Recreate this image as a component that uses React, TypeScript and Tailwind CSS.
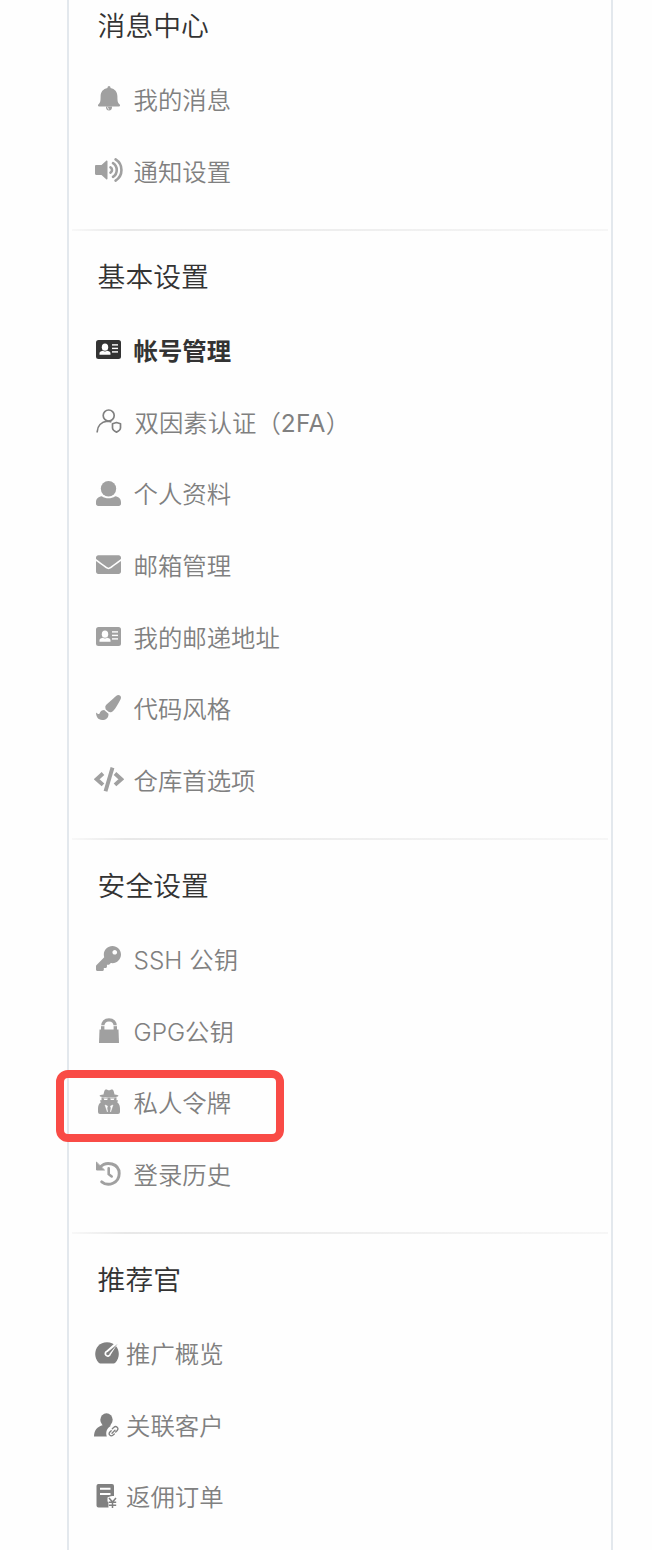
import type { ReactNode } from "react";
import { FaEnvelope, FaPaintBrush, FaKey } from "react-icons/fa";

const BellIcon = () => (
  <svg viewBox="0 0 22 25" className="h-[25px] w-[22px]" fill="currentColor">
    <path d="M9.500 1.500a1.500 1.500 0 0 1 3 0v.6c4.500.9 6.800 4 6.900 8.200 0 5.200.4 6.600 2.100 7.900 1 .9.500 2.400-1 2.400h-19c-1.500 0-2-1.500-1-2.400C2.200 16.900 2.600 15.500 2.600 10.300 2.700 6.100 5 3 9.500 2.100z" />
    <path d="M8 20.500h6c.2 2.400-1 4-3 4s-3.200-1.600-3-4z" />
    <path d="M9.600 21.200c0 1.200.6 1.900 1.500 2" fill="none" stroke="#fefefe" strokeWidth=".9" />
  </svg>
);

const VolumeIcon = () => (
  <svg viewBox="0 0 28 25" className="h-[25px] w-[28px]" fill="currentColor">
    <path d="M1.200 7h5.300l4.700-4.300c.5-.5 1.300-.2 1.300.6v17.400c0 .8-.8 1.100-1.300.6L6.500 17H1.200C.5 17 0 16.500 0 15.800V8.200C0 7.500.5 7 1.200 7z" />
    <g fill="none" stroke="currentColor" strokeWidth="2.600" strokeLinecap="round">
      <path d="M15.500 9.300c2 1.100 2 4.300 0 5.400" />
      <path d="M18 5.100c5 3.200 5 10.600 0 13.800" />
      <path d="M20.600 1.400c7.800 5 7.800 16.200 0 21.200" />
    </g>
  </svg>
);

const CardIcon = () => (
  <svg viewBox="0 0 25 19" className="h-[19px] w-[25px]" fill="currentColor">
    <rect width="25" height="19" rx="2.500" />
    <g fill="#fefefe">
      <ellipse cx="9" cy="7.200" rx="3.200" ry="3.600" />
      <path d="M3.500 14.800v-1.200c0-1.500.8-2.200 3.300-2.800 1.300.8 3.100.8 4.400 0 2.500.6 3.300 1.300 3.300 2.800v1.200z" />
      <rect x="16" y="4.200" width="6" height="1.400" />
      <rect x="16" y="7.700" width="6" height="1.400" />
      <rect x="16" y="11.200" width="6" height="1.400" />
    </g>
  </svg>
);

const ShieldUserIcon = () => (
  <svg viewBox="0 0 26 24" className="h-[24px] w-[26px] text-[#808080]" fill="none" stroke="currentColor" strokeWidth="1.700" strokeLinecap="round" strokeLinejoin="round">
    <circle cx="12.700" cy="6.500" r="5.500" />
    <path d="M1.200 22.800c.3-5.700 4-10 10-10.600 1.500 0 2.500.2 3.500.6" />
    <path d="M20.500 13.500l4 1.300v4c0 2-1.600 3.300-4 4.300-2.400-1-4-2.300-4-4.300v-4z" />
  </svg>
);

const UserIcon = () => (
  <svg viewBox="0 0 25 25" className="h-[25px] w-[25px]" fill="currentColor">
    <circle cx="12.500" cy="7.800" r="7.700" />
    <path d="M5.800 15.300c4 2.700 9.400 2.700 13.400 0 3.800.4 5.800 2.700 5.800 5.900v1.600c0 1.300-1 2.200-2.200 2.200H2.200C1 25 0 24.100 0 22.800v-1.600c0-3.200 2-5.500 5.800-5.900z" />
  </svg>
);

const CodeIcon = () => (
  <svg viewBox="0 0 30 25" className="h-[25px] w-[30px]" fill="none" stroke="currentColor" strokeWidth="3.900">
    <path d="M9 6.500L2.700 12.200L9 17.900M21 6.500L27.300 12.200L21 17.900" />
    <path d="M18.500 .6L11.500 24.200" />
  </svg>
);

const LockIcon = () => (
  <svg viewBox="0 0 20 25" className="h-[25px] w-[20px]" fill="currentColor">
    <path d="M.5 11.500h19L20 25H0z" />
    <path d="M3.700 12V8.500C3.700 4.500 6 1.900 10 1.900s6.300 2.600 6.300 6.600V12" fill="none" stroke="currentColor" strokeWidth="3.400" />
    <path d="M1.500 7.700h4.500M14 7.700h4.500" stroke="#fefefe" strokeWidth=".9" />
  </svg>
);

const AgentIcon = () => (
  <svg viewBox="0 0 22 25" className="h-[25px] w-[22px]" fill="currentColor">
    <path d="M7.500.6C8.800 0 9.800 1.200 11 1.200S13.200 0 14.500.6c1.200.8 1.600 3 2 4.800 2.500.4 4 .8 4 1.400 0 1-4 1.900-9.500 1.900s-9.500-.9-9.500-1.900c0-.6 1.500-1 4-1.400.4-1.800.8-4 2-4.800z" />
    <path d="M3.500 8.200c4.500.9 10.500.9 15 0v3h1.500l-.7 2.300c1.900 1.300 2.700 3.300 2.700 6.300v3.200a2 2 0 0 1-2 2H2a2 2 0 0 1-2-2v-3.200c0-3 .8-5 2.700-6.300L2 11.200h1.500z" />
    <path d="M5.500 9.600h4.300l-.6 1.500H6.300zM16.500 9.600h-4.300l.6 1.500h2.900z" fill="#fefefe" />
    <path d="M7 16l2.500 1-.5 2 .5 4zM15 16l-2.500 1 .5 2-.5 4z" fill="#fefefe" stroke="#fefefe" strokeWidth=".5" />
  </svg>
);

const HistoryIcon = () => (
  <svg viewBox="0 0 25 25" className="h-[25px] w-[25px]" fill="none" stroke="currentColor" strokeWidth="2.900" strokeLinecap="round">
    <path d="M4 6.200C10.500-.7 23.200 2.500 23.200 12.500c0 9.300-10.800 13.800-17.500 8.300" />
    <path d="M12.700 7.300v5.900l3 2.300" strokeWidth="2.600" />
    <path d="M.5 1.500V9h7.600z" fill="currentColor" strokeWidth="1" strokeLinejoin="round" />
  </svg>
);

const GaugeIcon = () => (
  <svg viewBox="0 0 24 22" className="h-[22px] w-[24px]" fill="currentColor">
    <path d="M3.700 20.700C-3.500 13 1 .3 12 .3S27.500 13 20.300 20.700c-.5.5-1 .8-1.700.8H5.400c-.7 0-1.200-.3-1.700-.8z" />
    <path d="M22.800 1.500L16 12.200a3.300 3.300 0 1 1-4.400-3.700L20 1z" fill="#fefefe" />
    <path d="M22.800 1.800l-8.200 9.800a1.700 1.700 0 1 1-1.900-1.700z" />
  </svg>
);

const LinkedUserIcon = () => (
  <svg viewBox="0 0 25 24" className="h-[24px] w-[25px]" fill="currentColor">
    <ellipse cx="12.500" cy="6.800" rx="6.200" ry="6.500" />
    <path d="M0 23.500c.2-6.500 3-9.500 9-11.500h6.500l1.500.8c-4 2.200-5.700 6.200-4.200 10.700z" />
    <g fill="none" stroke="currentColor" strokeWidth="1.300" strokeLinecap="round">
      <path d="M18.300 15.700l1.400-1.300c2.500-2.200 5.500.7 3.500 3.100l-1.500 1.500" />
      <path d="M20.300 21l-1.200 1.100c-2.500 2-5.200-.8-3.200-3.100l1.300-1.300M18 20.200l3-3" />
    </g>
  </svg>
);

const OrderIcon = () => (
  <svg viewBox="0 0 22 24" className="h-[24px] w-[22px]" fill="currentColor">
    <path d="M2 0h14a2 2 0 0 1 2 2v10c-2 0-4.500.3-6.500 1.500v4l1 .5v5.500H2.500a2 2 0 0 1-2-2V2A2 2 0 0 1 2 0z" />
    <path d="M4 4.700h10.500M4 10h10.500" stroke="#fefefe" strokeWidth="2" />
    <path d="M13 14l3.500 4 3.500-4M16.500 18v6M12.800 18h7.400M12.800 21.200h7.400" fill="none" stroke="#fefefe" strokeWidth="3" />
    <path d="M13 14l3.500 4 3.500-4M16.500 18v6M12.800 18.200h7.400M12.800 21.200h7.400" fill="none" stroke="currentColor" strokeWidth="1.500" />
  </svg>
);

type ItemProps = { icon: ReactNode; label: ReactNode; variant?: "default" | "active" | "compact"; marked?: boolean };

function Item({ icon, label, variant = "default", marked }: ItemProps) {
  const tone = variant === "active" ? "text-[#333] font-bold" : "text-[#808080]";
  const iconTone = variant === "active" ? "text-[#333]" : variant === "compact" ? "text-[#808080]" : "text-[#a0a0a0]";
  return (
    <li className={`relative flex h-[71.6px] items-center ${tone}`}>
      <span className={`flex h-full shrink-0 items-center justify-center ${iconTone} ${variant === "compact" ? "w-[25px] -ml-[4px] mr-[7px] pb-[2px]" : "w-[30px] -ml-[4.300px] mr-[9.800px] pb-[3px]"}`}>{icon}</span>
      <span className="text-[24.4px] leading-none whitespace-nowrap">{label}</span>
      {marked && <span className="absolute top-[2.500px] -left-[42px] h-[72px] w-[228px] rounded-[12px] border-8 border-[#f94b46]" />}
    </li>
  );
}

function Section({ title, last, children }: { title: string; last?: boolean; children: ReactNode }) {
  return (
    <section>
      <h2 className="flex h-[84.700px] items-center pt-[10px] pl-[28.600px] text-[27.800px] leading-none text-[#333]">{title}</h2>
      <ul className="pb-[21px] pl-[29px]">{children}</ul>
      {!last && <div className="ml-[3px] mr-[3px] h-[2px] bg-linear-to-r from-[#f8f8f8] via-[#e8e8e8] via-10% to-[#f6f6f6]" />}
    </section>
  );
}

export default function App() {
  return (
    <div className="h-[1550px] w-[652px] overflow-hidden bg-[#fefefe] font-[350] [font-family:Inter,'Noto_Sans_CJK_SC',sans-serif]">
      <nav className="-mt-[20px] ml-[67px] h-[1570px] w-[546px] border-x-2 border-[#e3e8ed]">
        <Section title="消息中心">
          <Item icon={<BellIcon />} label="我的消息" />
          <Item icon={<VolumeIcon />} label="通知设置" />
        </Section>
        <Section title="基本设置">
          <Item icon={<CardIcon />} label="帐号管理" variant="active" />
          <Item icon={<ShieldUserIcon />} label={<span className="pl-[1px]">双因素认证（<span className="font-normal tracking-[0.300px]">2FA</span>）</span>} />
          <Item icon={<UserIcon />} label="个人资料" />
          <Item icon={<FaEnvelope className="h-[25px] w-[25px]" />} label="邮箱管理" />
          <Item icon={<CardIcon />} label="我的邮递地址" />
          <Item icon={<FaPaintBrush className="h-[25px] w-[25px]" />} label="代码风格" />
          <Item icon={<CodeIcon />} label="仓库首选项" />
        </Section>
        <Section title="安全设置">
          <Item icon={<FaKey className="h-[25px] w-[25px]" />} label="SSH 公钥" />
          <Item icon={<LockIcon />} label="GPG公钥" />
          <Item icon={<AgentIcon />} label="私人令牌" marked />
          <Item icon={<HistoryIcon />} label="登录历史" />
        </Section>
        <Section title="推荐官" last>
          <Item icon={<GaugeIcon />} label="推广概览" variant="compact" />
          <Item icon={<LinkedUserIcon />} label="关联客户" variant="compact" />
          <Item icon={<OrderIcon />} label="返佣订单" variant="compact" />
        </Section>
      </nav>
    </div>
  );
}
